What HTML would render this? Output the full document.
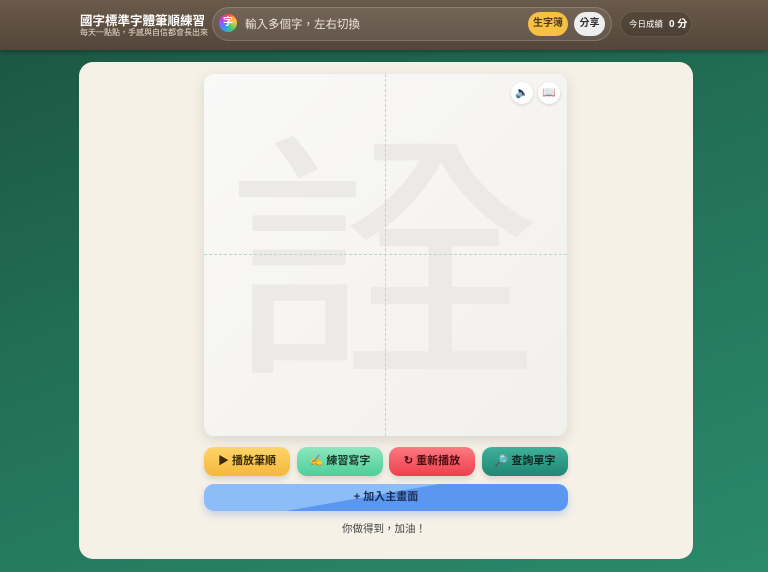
<!DOCTYPE html><html><head><meta charset="utf-8"><style>
*{margin:0;padding:0;box-sizing:border-box}
body{width:768px;height:572px;overflow:hidden;font-family:"Liberation Sans","Noto Sans CJK TC",sans-serif;background:linear-gradient(160deg,#1b5440 0%,#237258 50%,#2a8a6a 100%);position:relative}
.hdr{position:absolute;left:0;top:0;width:768px;height:50px;background:linear-gradient(#6a5a4a,#54463a);box-shadow:0 2px 4px rgba(0,0,0,.3)}
.t1{position:absolute;left:80px;top:10px;color:#fff;font-size:12.5px;font-weight:bold}
.t2{position:absolute;left:80px;top:27px;color:#e6ddd0;font-size:8px}
.inp{position:absolute;left:212px;top:7px;width:400px;height:34px;border-radius:17px;background:rgba(255,255,255,.08);border:1px solid rgba(255,255,255,.18)}
.ic{position:absolute;left:219px;top:14px;width:18px;height:18px;border-radius:50%;background:conic-gradient(#f44,#fc3,#4c6,#39f,#a4f,#f44);color:#fff;font-size:10px;text-align:center;line-height:18px;font-weight:bold}
.ph{position:absolute;left:245px;top:16px;color:#ece4d8;font-size:11.5px}
.b1{position:absolute;left:528px;top:12px;width:40px;height:24px;border-radius:12px;background:#f5c044;font-size:10px;text-align:center;line-height:24px;color:#4a3a10;font-weight:bold}
.b2{position:absolute;left:574px;top:12px;width:31px;height:24px;border-radius:12px;background:#eee;font-size:10px;text-align:center;line-height:24px;color:#333;font-weight:bold}
.sc{position:absolute;left:620px;top:11px;width:72px;height:26px;border-radius:13px;background:rgba(0,0,0,.15);border:1px solid rgba(255,255,255,.12);color:#fff;font-size:8.5px;line-height:24px;padding-left:8px}
.sc b{font-size:10px;margin-left:6px}
.card{position:absolute;left:79px;top:62px;width:614px;height:497px;border-radius:14px;background:#f6f1e7}
.cv{position:absolute;left:204px;top:74px;width:363px;height:362px;border-radius:10px;background:linear-gradient(135deg,#f9f9f8,#f2f0ec);box-shadow:0 4px 14px rgba(0,0,0,.12);overflow:hidden}
.vl{position:absolute;left:181px;top:0;height:100%;border-left:1px dashed #b5d9c8}
.hl{position:absolute;top:180px;left:0;width:100%;border-top:1px dashed #b5d9c8}
.ch{position:absolute;left:0;top:8px;width:100%;text-align:center;font-size:280px;line-height:320px;color:#ebeae8;font-family:"Noto Sans CJK TC","Noto Sans CJK SC",sans-serif;transform:scale(1.15,0.93);transform-origin:50% 50%}
.ci{position:absolute;top:8px;width:22px;height:22px;border-radius:50%;background:#fff;box-shadow:0 1px 3px rgba(0,0,0,.15);font-size:11px;text-align:center;line-height:22px}
.btn{position:absolute;top:447px;height:29px;width:86px;border-radius:10px;font-size:11px;font-weight:bold;text-align:center;line-height:29px;box-shadow:0 3px 6px rgba(0,0,0,.12)}
.bl{position:absolute;left:204px;top:484px;width:364px;height:27px;border-radius:10px;background:linear-gradient(170deg,#8dbdf8 45%,#5a97f0 46%);font-size:11px;font-weight:bold;text-align:center;line-height:27px;color:#1d2f55;box-shadow:0 4px 8px rgba(60,120,220,.25)}
.msg{position:absolute;left:0;width:768px;top:521px;text-align:center;font-size:10.5px;color:#444}
</style></head><body>
<div class="hdr"></div>
<div class="t1">國字標準字體筆順練習</div>
<div class="t2">每天一點點，手感與自信都會長出來</div>
<div class="inp"></div><div class="ic">字</div>
<div class="ph">輸入多個字，左右切換</div>
<div class="b1">生字簿</div><div class="b2">分享</div>
<div class="sc">今日成績<b>0 分</b></div>
<div class="card"></div>
<div class="cv"><div class="ch">詮</div><div class="vl"></div><div class="hl"></div>
<div class="ci" style="left:307px">🔈</div><div class="ci" style="left:334px">📖</div></div>
<div class="btn" style="left:204px;background:linear-gradient(#fcd56a,#f5b83c);color:#3a2a00">▶ 播放筆順</div>
<div class="btn" style="left:297px;background:linear-gradient(#8fe6c0,#4ccf98);color:#1a3a2a">✍ 練習寫字</div>
<div class="btn" style="left:389px;background:linear-gradient(#fb7a80,#ee3e4c);color:#4a0c10">↻ 重新播放</div>
<div class="btn" style="left:482px;background:linear-gradient(#3fb19a,#1f8674);color:#0c2a24">🔎 查詢單字</div>
<div class="bl">+ 加入主畫面</div>
<div class="msg">你做得到，加油！</div>
</body></html>
